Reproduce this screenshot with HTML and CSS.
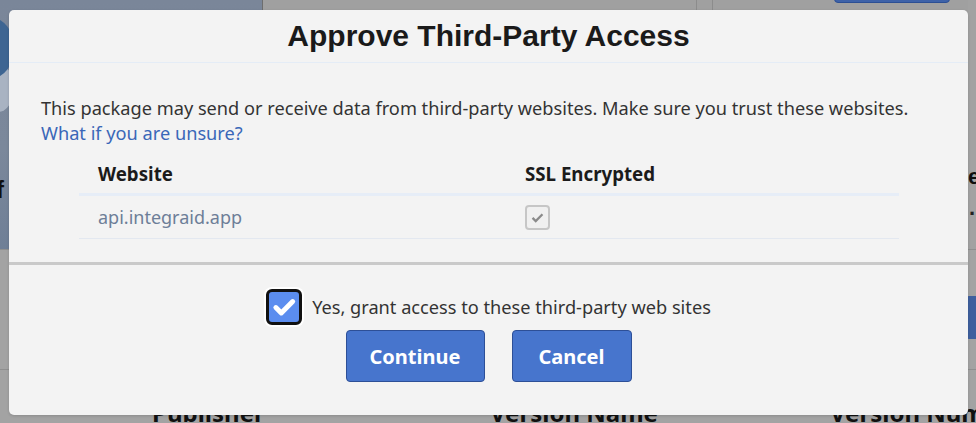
FILE: index.html
```html
<!DOCTYPE html>
<html lang="en">
<head>
<meta charset="utf-8">
<title>Approve Third-Party Access</title>
<link rel="stylesheet" href="styles.css">
</head>
<body>
<div class="page">
  <div class="top">
    <div class="hero">
      <div class="hero-shape"></div>
      <div class="hero-title">f</div>
    </div>
    <div class="main">
      <div class="main-cols">
        <div class="col col-a"></div>
        <div class="col col-b"></div>
        <div class="col col-c"><span class="outline-btn"></span></div>
      </div>
      <div class="side">
        <div class="side-title">e</div>
        <div class="side-dot">.</div>
      </div>
    </div>
  </div>
  <div class="middle">
    <div class="side-btn"></div>
  </div>
  <div class="thead">
    <span class="th th-1">Publisher</span>
    <span class="th th-2">Version Name</span>
    <span class="th th-3">Version Number</span>
  </div>
</div>

<div class="modal" role="dialog" aria-labelledby="modal-title">
  <div class="modal-header">
    <h2 id="modal-title" class="modal-title">Approve Third-Party Access</h2>
  </div>
  <div class="modal-body">
    <p class="intro">This package may send or receive data from third-party websites. Make sure you trust these websites.<br><a class="link" href="#">What if you are unsure?</a></p>
    <table class="sites">
      <thead>
        <tr><th class="c-site">Website</th><th class="c-ssl">SSL Encrypted</th></tr>
      </thead>
      <tbody>
        <tr>
          <td class="c-site site-name">api.integraid.app</td>
          <td class="c-ssl">
            <span class="mini-check">
              <svg viewBox="0 0 24 24" width="17" height="17"><path d="M5 12.5l4.5 4.5L19 7.5" fill="none" stroke="#8a8a8a" stroke-width="3.2"/></svg>
            </span>
          </td>
        </tr>
      </tbody>
    </table>
  </div>
  <div class="modal-footer">
    <label class="grant">
      <span class="big-check">
        <svg viewBox="0 0 24 24" width="26" height="26"><path d="M4.5 12.5l5 5L20 7" fill="none" stroke="#fff" stroke-width="4.6" stroke-linecap="round" stroke-linejoin="round"/></svg>
      </span>
      <span class="grant-text">Yes, grant access to these third-party web sites</span>
    </label>
    <div class="actions">
      <button class="btn btn-continue">Continue</button>
      <button class="btn btn-cancel">Cancel</button>
    </div>
  </div>
</div>
</body>
</html>
```
FILE: styles.css
```css
* { box-sizing: border-box; }
html, body { margin: 0; padding: 0; }
body {
  width: 976px;
  height: 423px;
  overflow: hidden;
  position: relative;
  background: #a3a3a3;
  font-family: "Noto Sans", "Open Sans", sans-serif;
}

/* background page (dimmed) */
.page { width: 976px; height: 423px; display: flex; flex-direction: column; overflow: hidden; }
.top { display: flex; height: 250px; border-bottom: 1px solid #8f8f8f; flex: none; }
.hero {
  width: 263px;
  flex: none;
  background: linear-gradient(180deg, #7a8699 0%, #7b889b 60%, #6f7f96 100%);
  position: relative;
  overflow: hidden;
  border-right: 1px solid #6e6e6e;
}
.hero-shape {
  position: absolute;
  left: -30px; top: 18px;
  width: 44px; height: 60px;
  border-radius: 50%;
  background: #3e6592;
  box-shadow: 6px 40px 0 -6px #a9b3c2;
}
.hero-title {
  position: absolute;
  left: -4px; top: 176px;
  font: 700 24px "Liberation Sans", sans-serif;
  color: #0f0f0f;
}
.main { flex: 1; display: flex; background: #a0a0a0; }
.main-cols { flex: 1; display: flex; }
.col { height: 100%; }
.col-a { width: 434px; border-right: 1px solid #8c8c8c; }
.col-b { width: 16px; border-right: 1px solid #8c8c8c; }
.col-c { flex: 1; position: relative; }
.outline-btn {
  position: absolute;
  left: 121px; top: -30px;
  width: 116px; height: 33px;
  border: 1px solid #2c4f93;
  border-radius: 4px;
  background: #3e62a8;
}
.side { width: 8px; flex: none; position: relative; background: #a2a2a2; overflow: hidden; }
.side-title { position: absolute; left: 0; top: 164px; font: 700 22px "Liberation Sans", sans-serif; color: #0f0f0f; }
.side-dot { position: absolute; left: 1px; top: 195px; font: 700 22px "Liberation Sans", sans-serif; color: #222; }
.middle { height: 120px; border-bottom: 1px solid #8f8f8f; position: relative; flex: none; }
.side-btn {
  position: absolute;
  left: 966px; top: 46px;
  width: 10px; height: 43px;
  background: #3e5f9e;
  border-radius: 3px 0 0 3px;
}
.thead { flex: 1; position: relative; overflow: hidden; }
.th { position: absolute; top: 26px; font: 700 24px "Noto Sans", sans-serif; color: #111; white-space: nowrap; }
.th-1 { left: 152px; }
.th-2 { left: 490px; }
.th-3 { left: 830px; }

/* modal */
.modal {
  position: absolute;
  left: 9px; top: 10px;
  width: 959px; height: 405px;
  background: #f3f3f3;
  border-radius: 5px;
  display: flex;
  flex-direction: column;
  box-shadow: 0 1px 3px rgba(0,0,0,0.15);
}
.modal-header {
  height: 53px;
  border-bottom: 1px solid #e4ecf6;
  display: flex;
  align-items: center;
  justify-content: center;
  flex: none;
}
.modal-title {
  margin: 0;
  font: 700 30px "Liberation Sans", Arial, sans-serif;
  color: #1a1a1a;
  padding-top: 0;
}
.modal-body {
  padding: 33px 32px 0 32px;
  height: 199px;
  flex: none;
}
.intro {
  margin: 0;
  font-size: 18.2px;
  line-height: 25px;
  color: #333;
}
.link { color: #3a67b8; text-decoration: none; }
.sites {
  margin: 9px 0 0 38px;
  width: 820px;
  border-collapse: collapse;
}
.sites th {
  text-align: left;
  font-size: 18.7px;
  font-weight: 700;
  color: #1b1b1b;
  height: 39px;
  padding: 0 19px;
  border-bottom: 3px solid #e6edf7;
  vertical-align: middle;
}
.sites td {
  font-size: 18px;
  height: 44px;
  padding: 0 19px;
  border-bottom: 1px solid #e3e8f0;
  vertical-align: middle;
}
.c-site { width: 427px; }
.site-name { color: #6d7e98; }
.mini-check {
  display: flex;
  align-items: center;
  justify-content: center;
  width: 25px; height: 25px;
  border: 2px solid #c6c6c6;
  border-radius: 4px;
  background: #f0f0f0;
  margin-top: 1px;
}

.modal-footer {
  flex: 1;
  border-top: 3px solid #c9c9c9;
  display: flex;
  flex-direction: column;
  align-items: center;
  padding-top: 24px;
}
.grant {
  display: flex;
  align-items: center;
  gap: 10px;
  font-size: 18.2px;
  color: #333;
}
.big-check {
  width: 36px; height: 36px;
  background: #5b8def;
  border: 3px solid #111;
  border-radius: 6px;
  box-shadow: 0 0 0 2px #fff;
  display: flex;
  align-items: center;
  justify-content: center;
}
.actions {
  display: flex;
  gap: 27px;
  margin-top: 5px;
}
.btn {
  height: 52px;
  border: 1px solid #2d4f97;
  border-radius: 4px;
  background: #4775cd;
  color: #fff;
  font: 700 20px "Noto Sans", "Open Sans", sans-serif;
  padding: 0;
}
.btn-continue { width: 139px; }
.btn-cancel { width: 120px; }
```
